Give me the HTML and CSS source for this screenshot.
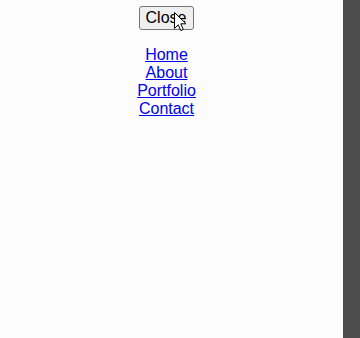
FILE: index.html
```html
<!DOCTYPE html>
<html>
<head>
<meta charset="utf-8">
<link rel="stylesheet" href="styles.css">
</head>
<body>
<div class="layout">
  <nav class="panel">
    <div class="btn-wrap">
      <button class="close">Close</button>
      <svg class="cursor" width="13" height="20" viewBox="0 0 13 20">
        <path d="M0.5 0.5 L0.5 16.5 L4.3 12.8 L6.8 18.6 L9.3 17.5 L6.8 11.8 L12 11.8 Z" fill="#fff" stroke="#000" stroke-width="1" stroke-linejoin="miter"/>
      </svg>
    </div>
    <ul class="links">
      <li><a href="#">Home</a></li>
      <li><a href="#">About</a></li>
      <li><a href="#">Portfolio</a></li>
      <li><a href="#">Contact</a></li>
    </ul>
  </nav>
  <div class="backdrop"></div>
</div>
</body>
</html>
```
FILE: styles.css
```css
html, body {
  margin: 0;
  padding: 0;
  height: 100%;
}
body {
  font-family: "Liberation Sans", Arial, sans-serif;
  font-size: 16px;
}
.layout {
  display: flex;
  height: 100%;
}
.panel {
  width: 333px;
  padding: 6px 10px 0 0;
  background: #fcfcfc;
  text-align: center;
}
.backdrop {
  flex: 1;
  background: #4d4d4d;
}
.btn-wrap {
  position: relative;
  display: inline-block;
}
.close {
  font-family: "Liberation Sans", Arial, sans-serif;
  font-size: 16px;
  line-height: 18px;
  padding: 2px 7px 2px 6px;
  border: 1px solid #767676;
  border-radius: 3px;
  background: #efefef;
  color: #000;
  display: block;
}
.cursor {
  position: absolute;
  left: 35px;
  top: 6px;
}
.links {
  list-style: none;
  margin: 16px 0 0;
  padding: 0;
}
.links li {
  line-height: 18px;
}
.links a {
  color: #0000ee;
  text-decoration: underline;
}
```
